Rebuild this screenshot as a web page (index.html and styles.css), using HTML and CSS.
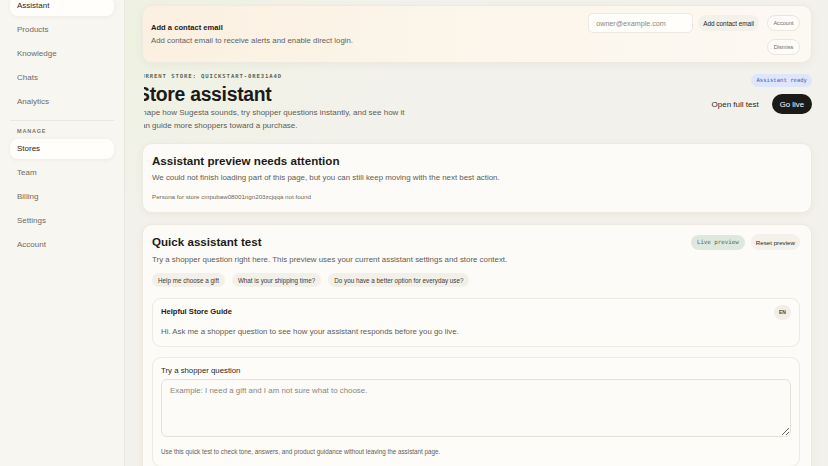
FILE: index.html
```html
<!DOCTYPE html>
<html lang="en">

<head>
    <meta charset="UTF-8" />
    <meta name="viewport" content="width=device-width, initial-scale=1.0" />
    <title>Sugesta | Store assistant</title>
    <link rel="stylesheet" href="styles.css">
</head>

<body>
    <div class="app">
        <aside class="sidebar">
            <nav class="nav">
                <a class="nav-item active">Assistant</a>
                <a class="nav-item">Products</a>
                <a class="nav-item">Knowledge</a>
                <a class="nav-item">Chats</a>
                <a class="nav-item">Analytics</a>
            </nav>
            <div class="nav-divider"></div>
            <div class="nav-label">Manage</div>
            <nav class="nav">
                <a class="nav-item active">Stores</a>
                <a class="nav-item">Team</a>
                <a class="nav-item">Billing</a>
                <a class="nav-item">Settings</a>
                <a class="nav-item">Account</a>
            </nav>
        </aside>

        <main class="main">
            <section class="card banner">
                <div class="banner-text">
                    <h3>Add a contact email</h3>
                    <p>Add contact email to receive alerts and enable direct login.</p>
                </div>
                <div class="banner-actions">
                    <input type="email" class="email-input" placeholder="owner@example.com" />
                    <button class="btn-soft">Add contact email</button>
                    <div class="banner-stack">
                        <button class="btn-ghost">Account</button>
                        <button class="btn-ghost">Dismiss</button>
                    </div>
                </div>
            </section>

            <header class="page-head">
                <div class="head-text">
                    <div class="eyebrow">Current store: quickstart-0re31a4d</div>
                    <h1>Store assistant</h1>
                    <p>Shape how Sugesta sounds, try shopper questions instantly, and see how it<br>can guide more shoppers toward a purchase.</p>
                </div>
                <div class="head-side">
                    <span class="badge-ready">Assistant ready</span>
                    <div class="head-buttons">
                        <button class="btn-link">Open full test</button>
                        <button class="btn-dark">Go live</button>
                    </div>
                </div>
            </header>

            <section class="card notice">
                <h2>Assistant preview needs attention</h2>
                <p>We could not finish loading part of this page, but you can still keep moving with the next best action.</p>
                <small>Persona for store cmpubaw08001ngn203zcjqqa not found</small>
            </section>

            <section class="card quick">
                <div class="quick-head">
                    <div>
                        <h2>Quick assistant test</h2>
                        <p>Try a shopper question right here. This preview uses your current assistant settings and store context.</p>
                    </div>
                    <div class="quick-tools">
                        <span class="badge-live">Live preview</span>
                        <button class="btn-soft">Reset preview</button>
                    </div>
                </div>

                <div class="chips">
                    <button class="chip">Help me choose a gift</button>
                    <button class="chip">What is your shipping time?</button>
                    <button class="chip">Do you have a better option for everyday use?</button>
                </div>

                <div class="inner guide">
                    <div class="guide-top">
                        <h4>Helpful Store Guide</h4>
                        <span class="lang">EN</span>
                    </div>
                    <p>Hi. Ask me a shopper question to see how your assistant responds before you go live.</p>
                </div>

                <div class="inner ask">
                    <label for="question">Try a shopper question</label>
                    <textarea id="question" placeholder="Example: I need a gift and I am not sure what to choose."></textarea>
                    <p class="hint">Use this quick test to check tone, answers, and product guidance without leaving the assistant page.</p>
                </div>
            </section>
        </main>
    </div>
</body>

</html>
```

FILE: styles.css
```css
body {
    margin: 0;
    padding: 0;
    background-color: #f3f1eb;
    font-family: 'Liberation Sans', Arial, sans-serif;
    color: #1d1b18;
    overflow: hidden;
}

.app {
    display: flex;
    margin-top: -4px;
    min-height: 480px;
}

/* sidebar */

.sidebar {
    width: 125px;
    flex-shrink: 0;
    background-color: #f8f6f1;
    border-right: 1px solid #ebe8e1;
    padding: 0 10px;
    box-sizing: border-box;
}

.nav {
    display: flex;
    flex-direction: column;
    gap: 4px;
}

.nav-item {
    display: block;
    height: 20px;
    line-height: 20px;
    padding: 0 7px;
    font-size: 8px;
    color: #6e6b64;
    border-radius: 8px;
}

.nav-item.active {
    background: #fffefb;
    color: #2a2824;
    box-shadow: 0 1px 4px rgba(60, 50, 30, 0.06);
}

.nav-divider {
    height: 1px;
    background: #ebe7df;
    margin: 8px 0 6px;
}

.nav-label {
    font-size: 5.5px;
    font-weight: 700;
    letter-spacing: 0.8px;
    text-transform: uppercase;
    color: #7b776f;
    padding: 0 7px;
    line-height: 8px;
    margin-bottom: 4px;
}

/* main column */

.main {
    flex: 1;
    padding: 9px 16px 0 17px;
    background: radial-gradient(ellipse 260px 180px at 0 40px, #eef2e1, rgba(243, 241, 235, 0));
}

.card {
    background: #fcfbf7;
    border: 1px solid #eeeae2;
    border-radius: 10px;
    box-shadow: 0 2px 8px rgba(70, 60, 40, 0.05);
}

button {
    font-family: inherit;
    cursor: pointer;
}

/* contact banner */

.banner {
    display: flex;
    align-items: center;
    justify-content: space-between;
    padding: 7px 11px 7px 8px;
    background: linear-gradient(90deg, #fbf0e1 0%, #fcf6ec 55%, #fcf9f3 100%);
}

.banner h3 {
    margin: 0 0 4px;
    font-size: 7.6px;
    font-weight: 700;
}

.banner p {
    margin: 0;
    font-size: 7.8px;
    color: #66625b;
}

.banner-actions {
    display: flex;
    align-items: flex-start;
    gap: 5px;
}

.email-input {
    width: 105px;
    height: 20px;
    box-sizing: border-box;
    border: 1px solid #eee9df;
    border-radius: 5px;
    background: #fffefb;
    padding: 0 7px;
    font-family: inherit;
    font-size: 7.2px;
}

.email-input::placeholder {
    color: #8b877f;
}

.btn-soft {
    height: 16px;
    margin-top: 2px;
    padding: 0 5px;
    border: none;
    border-radius: 8px;
    background: #f4f1ea;
    font-size: 6.4px;
    color: #2a2824;
}

.banner-stack {
    display: flex;
    flex-direction: column;
    gap: 8px;
    margin-left: 3px;
    margin-top: 2px;
}

.btn-ghost {
    width: 33px;
    height: 16px;
    padding: 0;
    border: 1px solid #ebe7de;
    border-radius: 8px;
    background: #fdfcf9;
    font-size: 5.6px;
    color: #6e6a62;
}

/* page header */

.page-head {
    display: flex;
    justify-content: space-between;
    align-items: flex-start;
    padding: 9px 0 11px;
    margin-left: 2px;
    overflow: hidden;
}

.head-text {
    margin-left: -7px;
}

.eyebrow {
    font-family: 'DejaVu Sans Mono', monospace;
    font-size: 5.6px;
    font-weight: 700;
    letter-spacing: 0.9px;
    text-transform: uppercase;
    color: #5d6658;
    line-height: 8px;
}

.page-head h1 {
    margin: 2px 0 0;
    font-size: 19.4px;
    letter-spacing: -0.3px;
    line-height: 24px;
}

.page-head p {
    margin: 0;
    font-size: 8px;
    line-height: 13px;
    color: #5f5c55;
}

.head-side {
    display: flex;
    flex-direction: column;
    align-items: flex-end;
    gap: 7px;
    padding-top: 2px;
}

.badge-ready {
    background: #dde6fa;
    color: #4a62b5;
    font-family: 'DejaVu Sans Mono', monospace;
    font-size: 5.6px;
    line-height: 13px;
    padding: 0 5px;
    border-radius: 7px;
}

.head-buttons {
    display: flex;
    align-items: center;
    gap: 13px;
}

.btn-link {
    border: none;
    background: none;
    padding: 0;
    font-size: 8px;
    color: #2a2824;
}

.btn-dark {
    height: 20px;
    padding: 0 8px;
    border: none;
    border-radius: 10px;
    background: #1c1a17;
    color: #ffffff;
    font-size: 7.8px;
}

/* notice card */

.notice {
    padding: 8px 9px 11px;
}

.notice h2,
.quick h2 {
    margin: 0;
    font-size: 11.6px;
    line-height: 17px;
}

.notice p,
.quick-head p {
    margin: 3px 0 0;
    font-size: 7.9px;
    line-height: 12px;
    color: #5f5c55;
}

.quick-head p {
    margin-top: 4px;
}

.notice small {
    display: block;
    margin-top: 8px;
    font-size: 6.2px;
    line-height: 9px;
    color: #6c6861;
}

/* quick test card */

.quick {
    margin-top: 11px;
    padding: 8px 11px 20px 9px;
}

.quick-head {
    display: flex;
    justify-content: space-between;
    align-items: flex-start;
}

.quick-tools {
    display: flex;
    align-items: center;
    gap: 6px;
    margin-top: 1px;
}

.badge-live {
    background: #dfe8df;
    color: #4b6a52;
    font-family: 'DejaVu Sans Mono', monospace;
    font-size: 5.8px;
    line-height: 15px;
    padding: 0 6px;
    border-radius: 8px;
}

.quick-tools .btn-soft {
    margin-top: 0;
    font-size: 6.2px;
}

.chips {
    display: flex;
    gap: 7px;
    margin: 7px 0 11px;
}

.chip {
    height: 14px;
    padding: 0 6px;
    border: none;
    border-radius: 7px;
    background: #f3f0e9;
    font-size: 6.3px;
    color: #3c3a35;
}

.inner {
    background: #fdfcf9;
    border: 1px solid #eeeae2;
    border-radius: 9px;
    padding: 6px 8px 10px;
}

.guide-top {
    display: flex;
    justify-content: space-between;
    align-items: center;
}

.guide h4 {
    margin: 0 0 3px;
    font-size: 7.6px;
}

.lang {
    width: 17px;
    height: 15px;
    line-height: 15px;
    text-align: center;
    border-radius: 8px;
    background: #f1eee7;
    font-size: 5px;
    font-weight: 700;
    color: #4a4741;
}

.guide p {
    margin: 7px 0 0;
    font-size: 7.85px;
    line-height: 9px;
    color: #5f5c55;
}

.ask {
    margin-top: 10px;
    padding-top: 8px;
}

.ask label {
    display: block;
    font-size: 7.8px;
    line-height: 9px;
    color: #2a2824;
    margin-bottom: 4px;
}

.ask textarea {
    display: block;
    width: 100%;
    height: 58px;
    box-sizing: border-box;
    padding: 6px 8px;
    border: 1px solid #e6e2d9;
    border-radius: 6px;
    background: #fcfbf7;
    font-family: inherit;
    font-size: 7.9px;
    resize: vertical;
}

.ask textarea::placeholder {
    color: #8a867e;
}

.hint {
    margin: 11px 0 0;
    font-size: 6.3px;
    line-height: 8px;
    color: #5f5c55;
}
```
